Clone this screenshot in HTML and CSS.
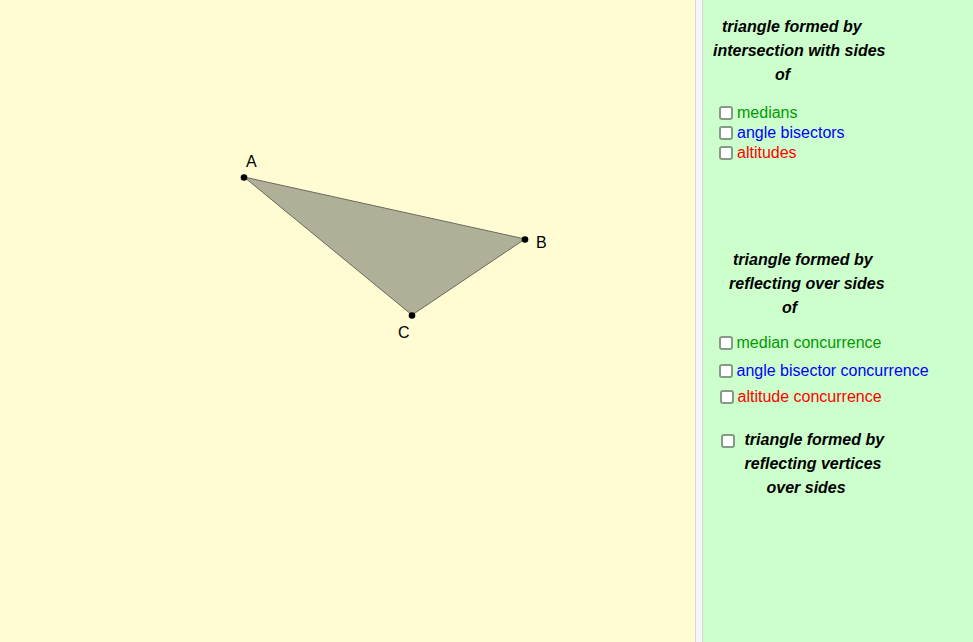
FILE: index.html
```html
<!DOCTYPE html>
<html>
<head>
<meta charset="utf-8">
<link rel="stylesheet" href="styles.css">
</head>
<body>
<div class="app">
  <div class="canvas">
    <svg class="drawing" width="695" height="642" viewBox="0 0 695 642">
      <polygon points="244,177 525,239 412,315" class="tri"/>
      <circle cx="244" cy="177.5" r="3.3" class="pt"/>
      <circle cx="525" cy="239.5" r="3.3" class="pt"/>
      <circle cx="412" cy="315.5" r="3.3" class="pt"/>
      <text x="246" y="167" class="lbl">A</text>
      <text x="536" y="248" class="lbl">B</text>
      <text x="398" y="338" class="lbl">C</text>
    </svg>
  </div>
  <div class="divider"></div>
  <div class="panel">
    <div class="heading h1">
      <div class="i19">triangle formed by</div>
      <div class="i10">intersection with sides</div>
      <div class="i72">of</div>
    </div>
    <div class="checks c1">
      <label class="row"><span class="box"></span><span class="green">medians</span></label>
      <label class="row"><span class="box"></span><span class="blue">angle bisectors</span></label>
      <label class="row"><span class="box"></span><span class="red">altitudes</span></label>
    </div>
    <div class="heading h2">
      <div class="i30">triangle formed by</div>
      <div class="i26">reflecting over sides</div>
      <div class="i79">of</div>
    </div>
    <div class="checks c2">
      <label class="row"><span class="box"></span><span class="green">median concurrence</span></label>
      <label class="row r2"><span class="box"></span><span class="blue">angle bisector concurrence</span></label>
      <label class="row r3"><span class="box b3"></span><span class="red">altitude concurrence</span></label>
    </div>
    <div class="h3">
      <span class="box boxh"></span>
      <div class="heading">
        <div>triangle formed by</div>
        <div>reflecting vertices</div>
        <div class="i22">over sides</div>
      </div>
    </div>
  </div>
</div>
</body>
</html>
```
FILE: styles.css
```css
html, body {
  margin: 0;
  padding: 0;
}
body {
  font-family: "Liberation Sans", Arial, sans-serif;
  font-size: 16px;
  overflow: hidden;
}
.app {
  display: flex;
  width: 973px;
  height: 642px;
}
.canvas {
  width: 695px;
  flex: none;
  background: #fffbd3;
}
.drawing {
  display: block;
}
.tri {
  fill: #b0af97;
  stroke: #6a6a5e;
  stroke-width: 1;
}
.pt {
  fill: #000;
}
.lbl {
  font-family: "Liberation Sans", Arial, sans-serif;
  font-size: 16px;
  fill: #000;
}
.divider {
  width: 6px;
  flex: none;
  background: #f6f6f6;
  border-left: 1px solid #d6d6d6;
  border-right: 1px solid #d6d6d6;
}
.panel {
  flex: 1;
  background: #ccffcc;
  padding-top: 14.5px;
  display: flex;
  flex-direction: column;
}
.heading {
  font-weight: bold;
  font-style: italic;
  line-height: 24px;
  color: #000;
}
.i19 { padding-left: 19px; }
.i10 { padding-left: 10px; }
.i72 { padding-left: 72px; }
.i30 { padding-left: 30px; }
.i26 { padding-left: 26px; }
.i79 { padding-left: 79px; }
.i22 { padding-left: 22px; }
.checks {
  display: flex;
  flex-direction: column;
}
.c1 {
  margin-top: 16.3px;
  padding-left: 16px;
}
.h2 {
  margin-top: 85.7px;
}
.c2 {
  margin-top: 12.7px;
  padding-left: 15.5px;
}
.row {
  display: flex;
  align-items: center;
  height: 20px;
  line-height: 20px;
}
.r2 { margin-top: 8px; }
.r3 { margin-top: 6px; }
.box {
  width: 10px;
  height: 10px;
  border: 2px solid #879987;
  border-radius: 3px;
  background: #fff;
  margin-right: 4px;
  flex: none;
}
.b3 {
  margin-left: 1px;
}
.green { color: #009900; }
.blue { color: #0000ff; }
.red { color: #ff0000; }
.h3 {
  display: flex;
  align-items: flex-start;
  margin-top: 21.3px;
  padding-left: 17.5px;
}
.boxh {
  margin-top: 5.5px;
  margin-right: 10px;
}
```
